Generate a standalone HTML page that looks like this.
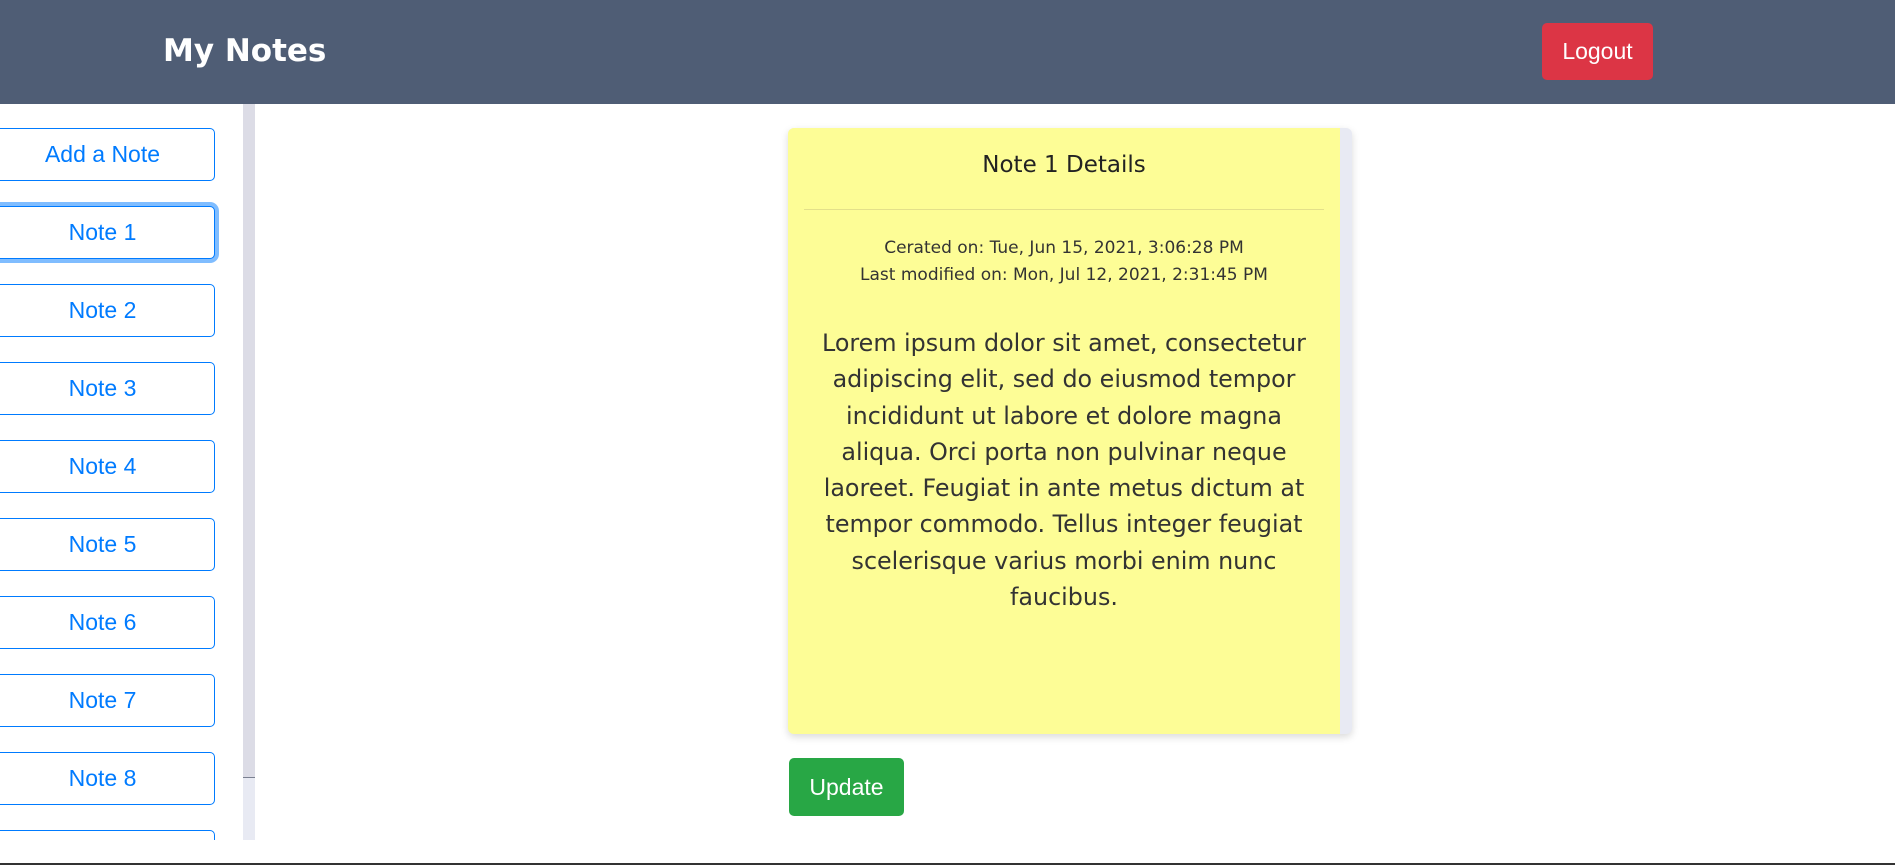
<!DOCTYPE html>
<html><head><style>
*{box-sizing:border-box;margin:0;padding:0}
body{width:1895px;height:865px;overflow:hidden;background:#fff;font-family:"Liberation Sans",sans-serif;position:relative}
.hdr{position:absolute;left:0;top:0;width:1895px;height:104px;background:#4f5d75}
.logo{position:absolute;left:163px;top:33px;color:#fff;font-family:"DejaVu Sans",sans-serif;font-weight:bold;font-size:31px}
.logout{position:absolute;left:1542px;top:23px;width:111px;height:57px;background:#dc3545;color:#fff;border-radius:5px;font-size:23px;text-align:center;line-height:57px}
.side{position:absolute;left:0;top:104px;width:243px;height:736px;overflow:hidden}
.btn{position:absolute;left:-10px;width:225px;height:53px;border:1.5px solid #007bff;border-radius:5px;color:#007bff;font-size:23px;text-align:center;line-height:50px;background:#fff}
.btn.f{box-shadow:0 0 0 4px #80bdff}
.sb{position:absolute;left:243px;top:104px;width:12px;height:736px;background:#e8eaf3}
.sbt{position:absolute;left:243px;top:104px;width:12px;height:674px;background:#dcdce6;border-bottom:1px solid #7a8090}
.card{position:absolute;left:788px;top:128px;width:564px;height:606px;background:#e8eaf3;border-radius:6px;box-shadow:0 3px 8px rgba(0,0,0,.15)}
.yel{position:absolute;left:0;top:0;width:552px;height:606px;background:#fdfd96;border-radius:6px 0 0 6px}
.title{position:absolute;top:24px;width:552px;text-align:center;font-family:"DejaVu Sans",sans-serif;font-size:23px;color:#222}
.hr{position:absolute;left:16px;top:81px;width:520px;height:1px;background:#e3e08a}
.dates{position:absolute;top:107px;width:552px;text-align:center;font-family:"DejaVu Sans",sans-serif;font-size:17px;line-height:27px;color:#333}
.body{position:absolute;top:197px;width:552px;text-align:center;font-family:"DejaVu Sans",sans-serif;font-size:23.8px;line-height:36.3px;color:#333}
.upd{position:absolute;left:789px;top:758px;width:115px;height:58px;background:#28a745;color:#fff;border-radius:5px;font-size:23px;text-align:center;line-height:58px}
.bot{position:absolute;left:0;top:863px;width:1895px;height:2px;background:#333}
</style></head><body>
<div class="hdr"><div class="logo">My Notes</div><div class="logout">Logout</div></div>
<div class="side">
<div class="btn" style="top:24px">Add a Note</div>
<div class="btn f" style="top:102px">Note 1</div>
<div class="btn" style="top:180px">Note 2</div>
<div class="btn" style="top:258px">Note 3</div>
<div class="btn" style="top:336px">Note 4</div>
<div class="btn" style="top:414px">Note 5</div>
<div class="btn" style="top:492px">Note 6</div>
<div class="btn" style="top:570px">Note 7</div>
<div class="btn" style="top:648px">Note 8</div>
<div class="btn" style="top:726px">Note 9</div>
</div>
<div class="sb"></div><div class="sbt"></div>
<div class="card"><div class="yel">
<div class="title">Note 1 Details</div>
<div class="hr"></div>
<div class="dates">Cerated on: Tue, Jun 15, 2021, 3:06:28 PM<br>Last modified on: Mon, Jul 12, 2021, 2:31:45 PM</div>
<div class="body">Lorem ipsum dolor sit amet, consectetur<br>adipiscing elit, sed do eiusmod tempor<br>incididunt ut labore et dolore magna<br>aliqua. Orci porta non pulvinar neque<br>laoreet. Feugiat in ante metus dictum at<br>tempor commodo. Tellus integer feugiat<br>scelerisque varius morbi enim nunc<br>faucibus.</div>
</div></div>
<div class="upd">Update</div>
<div class="bot"></div>
</body></html>
